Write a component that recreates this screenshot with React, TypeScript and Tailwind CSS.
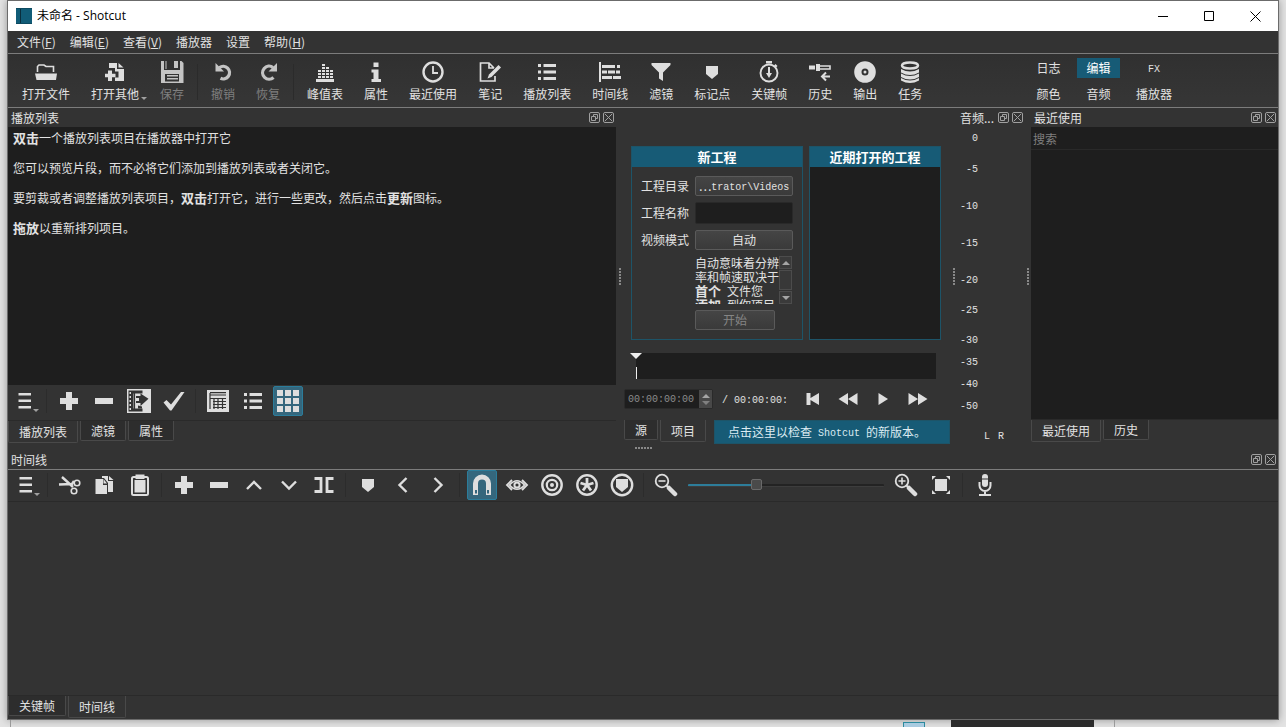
import React, { useState } from 'react';
import type { ReactNode } from 'react';

function Svg({ children, size = 24 }: { children: ReactNode; size?: number }) {
  return (
    <svg width={size} height={size} viewBox="0 0 24 24" fill="currentColor" aria-hidden="true" className="shrink-0">
      {children}
    </svg>
  );
}

const stroke = { fill: 'none', stroke: 'currentColor' } as const;
const SHIELD = 'M6 6h12v8l-6 5-6-5z';

const icons: Record<string, ReactNode> = {
  open: (
    <>
      <path d="M3.500 12V6.500l1.500-1.500h5l2 1.500h7.500V12" {...stroke} strokeWidth="1.600" />
      <path d="M1 13.500h22L22 20H2.500z" />
    </>
  ),
  other: (
    <>
      <path d="M6 3h8v6h7v12H12v-3.500h3.500v-6H12V8H6z" />
      <path d="M15.500 3l5 4.500h-5z" />
      <path d="M5 10.500h4v3.300h3.500v3.400H9V21H5v-3.800H2v-3.400h3z" />
    </>
  ),
  save: (
    <>
      <path fillRule="evenodd" d="M1 1h3v9h16V1h1.500L23.500 3v20H1zM5 14v7.500h14V14z" />
      <path d="M14 1h4v7h-4zM5.500 1h1v8h-1zM7 15h11v1.500H7zM7 18h11v1.500H7z" />
    </>
  ),
  undo: (
    <>
      <path d="M8.500 7.500A6.300 6.300 0 1 1 9.500 18.300" {...stroke} strokeWidth="3.300" />
      <path d="M4.500 3v8.500H13z" />
    </>
  ),
  redo: (
    <>
      <path d="M17 7.500a6.500 6.500 0 1 0 .5 10" {...stroke} strokeWidth="3.300" />
      <path d="M21 3v8.500h-8.500z" />
    </>
  ),
  peak: (
    <path d="M3 19h18v3H3zM5 16h3v2H5zM9 16h3v2H9zM13 16h3v2h-3zM17 16h3v2h-3zM5 13h3v2H5zM9 13h3v2H9zM13 13h3v2h-3zM17 13h3v2h-3zM5 10h3v2H5zM9 10h3v2H9zM13 10h3v2h-3zM17 10h3v2h-3zM9 7h3v2H9zM13 7h3v2h-3zM9 4h3v2H9z" />
  ),
  info: <path d="M9.500 2.500h5v4.500h-5zM7.500 9.500h7V19H17v3H7.500v-3h2v-6.500h-2z" />,
  clock: (
    <>
      <circle cx="12" cy="12" r="9.500" {...stroke} strokeWidth="2.400" />
      <path d="M12 6v7h5" {...stroke} strokeWidth="1.800" />
    </>
  ),
  notes: (
    <>
      <path d="M17 16v5H2.500V3H11l5 5M11 3v5h5" {...stroke} strokeWidth="1.700" />
      <path d="M20.500 5l2.500 2.500L13.500 17l-4 1.500L11 14.500z" />
    </>
  ),
  list: <path d="M3 4h3v3H3zM8.500 4H21v3H8.500zM3 10.500h3v3H3zM8.500 10.500H21v3H8.500zM3 17h3v3H3zM8.500 17H21v3H8.500z" />,
  timeline: <path d="M1 2h2v20H1zM4 5h13v3H4zM19 5h3v3h-3zM4 10.500h5v3H4zM10 10.500h7v3h-7zM18 10.500h4v3h-4zM4 16h10v3H4zM15 16h8v3h-8z" />,
  filter: <path d="M2.500 3h19v2l-7.500 7.500V21l-4-2.500v-6L2.500 5z" />,
  marker: <path d={SHIELD} />,
  stopwatch: (
    <>
      <circle cx="12" cy="13" r="8.500" {...stroke} strokeWidth="1.900" />
      <path d="M9 1h6v2.500H9zM18.500 4l2 2-1.500 1.500-2-2zM11 7h2v6h2l-3 5-3-5h2z" />
    </>
  ),
  history: (
    <>
      <path d="M1 5.500h6v4H1zM8 4h4v7H8z" />
      <path d="M12 6h10v3H12" {...stroke} strokeWidth="1.600" />
      <path d="M18 12.500l-4 4 4 4M14 16.500h8" {...stroke} strokeWidth="2" />
    </>
  ),
  disc: (
    <path fillRule="evenodd" d="M12 1.200a10.800 10.800 0 1 0 0 21.600 10.800 10.800 0 0 0 0-21.600zM12 8.500a3.500 3.500 0 1 1 0 7 3.500 3.500 0 0 1 0-7zM12 10.500a1.500 1.500 0 1 0 0 3 1.500 1.500 0 0 0 0-3z" />
  ),
  jobs: (
    <>
      <ellipse cx="12" cy="5.500" rx="8" ry="3" {...stroke} strokeWidth="2.500" />
      <path d="M3 9q9 5 18 0v3.500q-9 5-18 0zM3 13.500q9 5 18 0v3.500q-9 5-18 0zM3 18q9 5 18 0v2.500q-9 5-18 0z" />
    </>
  ),
  menu: <path d="M5.500 4H18v2.500H5.500zM5.500 10.500H18V13H5.500zM5.500 17H18v2.500H5.500z" />,
  plus: <path d="M9 3h6v6h6v6h-6v6H9v-6H3V9h6z" />,
  minus: <path d="M3 9h18v6H3z" />,
  film: (
    <>
      <path d="M0 0h24v24H0z" />
      <path d="M1.500 1.500h14v3h-14zM1.500 4h4v16h-4zM1.500 19.500h14v3h-14zM5 4h1.500v16H5z" fill="#333" />
      <path d="M7.500 4v16" stroke="#333" strokeWidth="1.200" />
      <path d="M2.500 3h1.500v2H2.500zM2.500 7h1.500v2H2.500zM2.500 11h1.500v2H2.500zM2.500 15h1.500v2H2.500zM2.500 19h1.500v2H2.500z" />
      <path d="M13.500 4.500V7H9v7h4.500v3l8-7.200zM11 16.500v3h4v-2" fill="#333" />
      <path d="M9 9h3v3H9z" />
    </>
  ),
  check: <path d="M1.500 13.500L4.500 11l4.500 4.500L19 3h3.500L9.500 21.500H8z" />,
  table: (
    <>
      <path d="M1 1h22v22H1z" />
      <path d="M4 3.700h16M4 6h16M4 4v16M4 9.500h16M7 12.500h13M7 15.500h13M7 18.500h13M8 9v11M12 9v11M16.500 9v11" fill="none" stroke="#333" strokeWidth="1.200" />
    </>
  ),
  grid: <path d="M1 1h6v6H1zM9 1h6v6H9zM17 1h6v6h-6zM1 9h6v6H1zM9 9h6v6H9zM17 9h6v6h-6zM1 17h6v6H1zM9 17h6v6H9zM17 17h6v6h-6z" />,
  cut: (
    <>
      <path d="M4 4l11 10M1 11.500l13-.5 2-3" {...stroke} strokeWidth="2.400" />
      <circle cx="19" cy="10" r="2.800" {...stroke} strokeWidth="1.600" />
      <circle cx="16" cy="18" r="2.800" {...stroke} strokeWidth="1.600" />
    </>
  ),
  copy: (
    <>
      <path d="M2.500 6H10v6h4v9H2.500zM10.500 6L14 10.500h-3.500z" />
      <path d="M9 3h6v5h5v11h-5V10L11 5H9zM16 3l4.500 4H16z" />
    </>
  ),
  paste: (
    <>
      <rect x="4" y="4" width="16" height="18" rx="1.500" {...stroke} strokeWidth="2" />
      <path d="M6.500 7h11v12.500h-11zM7.500 1.500h9V6h-9z" />
      <path d="M7.500 6.500h9" stroke="#333" />
    </>
  ),
  up: <path d="M5 16l7-7 7 7" {...stroke} strokeWidth="2.400" />,
  down: <path d="M5 8.500l7 7 7-7" {...stroke} strokeWidth="2.400" />,
  left: <path d="M15.500 5l-7 7 7 7" {...stroke} strokeWidth="2.400" />,
  right: <path d="M8.500 5l7 7-7 7" {...stroke} strokeWidth="2.400" />,
  split: <path d="M2.500 5.500h6.500v13H2.500M21.500 5.500H15v13h6.500" {...stroke} strokeWidth="2.800" />,
  magnet: (
    <>
      <path d="M5.500 22V10.500a6.500 6.500 0 0 1 13 0V22" {...stroke} strokeWidth="5" />
      <path d="M5 17h2v3.500H5zM17 17h2v3.500h-2z" fill="#35677d" />
    </>
  ),
  scrub: (
    <>
      <path d="M7 7l-5 5 5 5M17 7l5 5-5 5" {...stroke} strokeWidth="1.900" />
      <path d="M4.500 12q7.500-8.500 15 0-7.500 8.500-15 0z" {...stroke} strokeWidth="1.700" />
      <circle cx="12" cy="12" r="2.600" {...stroke} strokeWidth="2" />
    </>
  ),
  ripple: (
    <>
      <circle cx="12" cy="12" r="9.700" {...stroke} strokeWidth="2.400" />
      <circle cx="12" cy="12" r="5.200" {...stroke} strokeWidth="2.200" />
      <circle cx="12" cy="12" r="2" />
    </>
  ),
  rippleAll: (
    <>
      <circle cx="12" cy="12" r="9.700" {...stroke} strokeWidth="2.400" />
      <path d="M12 5v7M5.500 10l6.500 2M18.500 10L12 12M8 17.500l4-5.500 4 5.500" {...stroke} strokeWidth="2.800" />
    </>
  ),
  rippleMarker: (
    <>
      <circle cx="12" cy="12" r="10.200" {...stroke} strokeWidth="2.400" />
      <path d="M6 6h12v8l-6 5-6-5z" />
    </>
  ),
  zoomOut: (
    <>
      <circle cx="8" cy="8" r="6.300" {...stroke} strokeWidth="1.800" />
      <path d="M4.500 8h7" stroke="currentColor" strokeWidth="1.600" />
      <path d="M12.500 12.500l2 2" stroke="currentColor" strokeWidth="2" />
      <path d="M15 15l6 6" stroke="currentColor" strokeWidth="4.500" strokeLinecap="round" />
    </>
  ),
  zoomIn: (
    <>
      <circle cx="8" cy="8" r="6.300" {...stroke} strokeWidth="1.800" />
      <path d="M4.500 8h7M8 4.500v7" stroke="currentColor" strokeWidth="1.600" />
      <path d="M12.500 12.500l2 2" stroke="currentColor" strokeWidth="2" />
      <path d="M15 15l6 6" stroke="currentColor" strokeWidth="4.500" strokeLinecap="round" />
    </>
  ),
  fit: (
    <>
      <path d="M6 6h12v12H6z" />
      <path d="M3 3h4L3 7zM21 3v4l-4-4zM3 21v-4l4 4zM21 21h-4l4-4z" />
    </>
  ),
  mic: (
    <>
      <rect x="9" y="1" width="6" height="13" rx="3" />
      <path d="M9 6h6" stroke="#333" />
      <path d="M6.500 9v3.500a5.500 5.500 0 0 0 11 0V9M12 18v4M6 22h12" {...stroke} strokeWidth="2" />
    </>
  ),
  start: <path d="M5.500 6h4v5L18 6v12l-8.500-5v5h-4z" />,
  rewind: <path d="M12 6v12l-9.500-6zM21.500 6v12L12 12z" />,
  play: <path d="M7.500 6l9.500 6-9.500 6z" />,
  forward: <path d="M2.500 6l9.500 6-9.500 6zM12 6l9.500 6-9.500 6z" />,
};

function Caret({ className }: { className: string }) {
  return <span className={`absolute border-x-[3px] border-t-[3px] border-x-transparent border-t-[#a0a0a0] ${className}`} />;
}

type Tool = { icon: string; label: string; disabled?: boolean; menu?: boolean } | 'sep';

const mainTools: Tool[] = [
  { icon: 'open', label: '打开文件' },
  { icon: 'other', label: '打开其他', menu: true },
  { icon: 'save', label: '保存', disabled: true },
  'sep',
  { icon: 'undo', label: '撤销', disabled: true },
  { icon: 'redo', label: '恢复', disabled: true },
  'sep',
  { icon: 'peak', label: '峰值表' },
  { icon: 'info', label: '属性' },
  { icon: 'clock', label: '最近使用' },
  { icon: 'notes', label: '笔记' },
  { icon: 'list', label: '播放列表' },
  { icon: 'timeline', label: '时间线' },
  { icon: 'filter', label: '滤镜' },
  { icon: 'marker', label: '标记点' },
  { icon: 'stopwatch', label: '关键帧' },
  { icon: 'history', label: '历史' },
  { icon: 'disc', label: '输出' },
  { icon: 'jobs', label: '任务' },
];

function ToolButton({ icon, label, active, menu }: { icon: string; label: string; active?: boolean; menu?: boolean }) {
  return (
    <button
      type="button"
      aria-label={label}
      aria-pressed={active}
      className={`relative flex h-[30px] w-[30px] shrink-0 items-center justify-center rounded-[2px] border text-[#dedede] ${
        active ? 'border-[#2b7d9b] bg-[#35677d]' : 'border-transparent'
      }`}
    >
      <Svg>{icons[icon]}</Svg>
      {menu && <Caret className="right-0 bottom-[3px]" />}
    </button>
  );
}

function Sep() {
  return <span className="mx-[1px] mt-[3px] h-6 w-[2px] shrink-0 border-l border-[#2c2c2c]" />;
}

function DockTitle({ children }: { children: ReactNode }) {
  return (
    <header className="flex h-[19px] shrink-0 items-center gap-[3px] pr-[2px] pl-[3px]">
      <h2 className="min-w-0 flex-1 text-[12px] leading-4 whitespace-nowrap">{children}</h2>
      <button type="button" aria-label="浮动" className="text-[#a0a0a0]">
        <svg width="11" height="11" viewBox="0 0 11 11" fill="none" stroke="currentColor">
          <rect x=".5" y=".5" width="10" height="10" rx="1.500" />
          <path d="M4.500 4V2.500h4v4H7M2.500 4.500h4v4h-4z" />
        </svg>
      </button>
      <button type="button" aria-label="关闭" className="text-[#a0a0a0]">
        <svg width="11" height="11" viewBox="0 0 11 11" fill="none" stroke="currentColor">
          <rect x=".5" y=".5" width="10" height="10" rx="1.500" />
          <path d="M2 2l7 7M9 2l-7 7" />
        </svg>
      </button>
    </header>
  );
}

function Tabs({ items, initial = 0 }: { items: string[]; initial?: number }) {
  const [current, setCurrent] = useState(initial);
  return (
    <div role="tablist" className="flex items-start gap-[2px]">
      {items.map((item, i) => (
        <button
          key={item}
          type="button"
          role="tab"
          aria-selected={i === current}
          onClick={() => setCurrent(i)}
          className={`rounded-b-[2px] border border-t-0 border-[#494949] px-[10px] leading-4 ${
            i === current ? 'bg-[#333] pt-[3px] pb-[2px]' : 'bg-[#2d2d2d] pt-[2px] pb-px'
          }`}
        >
          {item}
        </button>
      ))}
    </div>
  );
}

function Grip({ horizontal }: { horizontal?: boolean }) {
  return (
    <span className={`flex gap-px ${horizontal ? '' : 'flex-col'}`}>
      {[0, 1, 2, 3, 4, 5].map((n) => (
        <i key={n} className="h-[2px] w-[2px] bg-[#888]" />
      ))}
    </span>
  );
}

const Mono = ({ children }: { children: ReactNode }) => (
  <span className="align-[1px] font-['Liberation_Mono',monospace] text-[10px] leading-none whitespace-pre">{children}</span>
);

const B = ({ children }: { children: ReactNode }) => <b className="text-[13px] leading-none font-bold">{children}</b>;

const menus: [string, string?][] = [['文件', 'F'], ['编辑', 'E'], ['查看', 'V'], ['播放器'], ['设置'], ['帮助', 'H']];

const layouts = ['日志', '编辑', 'FX', '颜色', '音频', '播放器'];

const levels = [
  { label: '0', gap: '' },
  { label: '-5', gap: 'mt-[15px]' },
  { label: '-10', gap: 'mt-[21px]' },
  { label: '-15', gap: 'mt-[21px]' },
  { label: '-20', gap: 'mt-[21px]' },
  { label: '-25', gap: 'mt-[14px]' },
  { label: '-30', gap: 'mt-[14px]' },
  { label: '-35', gap: 'mt-[6px]' },
  { label: '-40', gap: 'mt-[6px]' },
  { label: '-50', gap: 'mt-[6px]' },
];

const raised = 'rounded-[2px] border border-[#5a5a5a] bg-linear-to-b from-[#454545] to-[#3a3a3a]';

function TitleBar() {
  return (
    <div className="flex h-[30px] shrink-0 items-center bg-white pl-2 text-black">
      <svg width="16" height="16" viewBox="0 0 16 16" aria-hidden="true">
        <path d="M0 0h16v16H0z" fill="#115c77" />
        <path d="M4.500 0v16" stroke="#0a2e3d" />
        <path d="M0 .5h16M0 15.500h16" stroke="#0d4a60" />
      </svg>
      <h1 className="ml-[5px] flex-1 font-['Open_Sans','Noto_Sans_CJK_SC',sans-serif] text-[12px]">未命名 - Shotcut</h1>
      <button type="button" aria-label="最小化" className="flex h-full w-[46px] items-center justify-center">
        <svg width="11" height="11" viewBox="0 0 11 11" stroke="currentColor"><path d="M0 5.500h10" /></svg>
      </button>
      <button type="button" aria-label="最大化" className="flex h-full w-[46px] items-center justify-center">
        <svg width="11" height="11" viewBox="0 0 11 11" fill="none" stroke="currentColor"><path d="M.5.5h9v9h-9z" /></svg>
      </button>
      <button type="button" aria-label="关闭窗口" className="flex h-full w-[46px] items-center justify-center">
        <svg width="11" height="11" viewBox="0 0 11 11" stroke="currentColor"><path d="M.5.5l10 10M10.500.5l-10 10" /></svg>
      </button>
    </div>
  );
}

function MainToolbar() {
  return (
    <div className="flex h-[54px] shrink-0 items-start border-b border-[#7c7c7c] bg-linear-to-b from-[#303030] to-[#363636]">
      <div className="flex gap-px pt-[6px] pl-1">
        {mainTools.map((t, i) =>
          t === 'sep' ? (
            <span key={i} className="flex w-[5px] justify-center">
              <i className="mt-1 h-9 w-px bg-[#2b2b2b]" />
            </span>
          ) : (
            <button key={i} type="button" disabled={t.disabled} className="relative flex flex-col items-center px-[10px]">
              <span className={t.disabled ? 'text-[#c4c4c4]' : 'text-[#dedede]'}>
                <Svg>{icons[t.icon]}</Svg>
              </span>
              <span className={`mt-[2px] leading-4 ${t.disabled ? 'text-[#7f7f7f]' : ''}`}>{t.label}</span>
              {t.menu && <Caret className="right-[2px] bottom-[2px]" />}
            </button>
          ),
        )}
      </div>
      <div className="mt-1 mr-[97px] ml-auto grid grid-cols-[43px_43px_54px] gap-x-[7px] gap-y-[6px]">
        {layouts.map((l) => (
          <button key={l} type="button" className={`h-5 leading-5 ${l === '编辑' ? 'bg-[#175b76] text-white' : ''}`}>
            {l === 'FX' ? <Mono>FX</Mono> : l}
          </button>
        ))}
      </div>
    </div>
  );
}

function PlaylistDock() {
  return (
    <section className="flex min-w-0 flex-1 flex-col">
      <DockTitle>播放列表</DockTitle>
      <div className="flex-1 space-y-[15px] bg-[#1e1e1e] pt-[3px] pl-[5px] leading-[15px]">
        <p><B>双击</B>一个播放列表项目在播放器中打开它</p>
        <p>您可以预览片段，而不必将它们添加到播放列表或者关闭它。</p>
        <p>要剪裁或者调整播放列表项目，<B>双击</B>打开它，进行一些更改，然后点击<B>更新</B>图标。</p>
        <p><B>拖放</B>以重新排列项目。</p>
      </div>
      <div className="flex h-9 shrink-0 items-start gap-[5px] border-b border-[#2a2a2a] pt-px pl-[2px]">
        <ToolButton icon="menu" label="菜单" menu />
        <Sep />
        <ToolButton icon="plus" label="添加" />
        <ToolButton icon="minus" label="移除" />
        <ToolButton icon="film" label="添加文件到播放列表" />
        <ToolButton icon="check" label="更新" />
        <Sep />
        <ToolButton icon="table" label="详细视图" />
        <ToolButton icon="list" label="列表视图" />
        <ToolButton icon="grid" label="图标视图" active />
      </div>
      <div className="h-6 shrink-0">
        <Tabs items={['播放列表', '滤镜', '属性']} />
      </div>
    </section>
  );
}

function ProjectPanels() {
  return (
    <div className="mt-[38px] ml-[7px] flex h-[194px] shrink-0 gap-[6px]">
      <section className="flex w-[172px] flex-col border border-[#1d5468]">
        <h3 className="h-5 bg-[#175b76] text-center text-[13px] leading-5 font-bold text-white">新工程</h3>
        <form className="grid grid-cols-[48px_98px] gap-x-[6px] pt-[9px] pl-[9px]" onSubmit={(e) => e.preventDefault()}>
          <label htmlFor="folder" className="leading-5">工程目录</label>
          <button id="folder" type="button" className={`h-5 leading-[18px] whitespace-nowrap ${raised}`}>⋯<Mono>trator\Videos</Mono></button>
          <label htmlFor="name" className="mt-[6px] leading-[22px]">工程名称</label>
          <input id="name" className="mt-[6px] h-[22px] w-full rounded-[2px] border border-[#292929] bg-[#1e1e1e] px-1 outline-none" />
          <label htmlFor="mode" className="mt-[6px] leading-5">视频模式</label>
          <button id="mode" type="button" className={`mt-[6px] h-5 leading-[18px] ${raised}`}>自动</button>
          <div className="col-start-2 mt-[6px] flex h-[48px] overflow-hidden">
            <p className="w-[84px] shrink-0 leading-[14px] whitespace-nowrap">
              自动意味着分辨<br />率和帧速取决于<br /><B>首个</B><Mono> </Mono>文件您<br /><B>添加</B><Mono> </Mono>到你项目
            </p>
            <div className="flex w-[13px] flex-col">
              <span className="flex h-[13px] items-center justify-center border border-[#4c4c4c] bg-[#3a3a3a]">
                <i className="border-x-4 border-b-4 border-x-transparent border-b-[#a5a5a5]" />
              </span>
              <span className="my-px flex-1 border border-[#4c4c4c] bg-[#383838]" />
              <span className="flex h-[13px] items-center justify-center border border-[#4c4c4c] bg-[#3a3a3a]">
                <i className="border-x-4 border-t-4 border-x-transparent border-t-[#a5a5a5]" />
              </span>
            </div>
          </div>
          <button type="submit" disabled className={`col-start-2 mt-[6px] h-5 w-[80px] leading-[18px] text-[#858585] ${raised}`}>开始</button>
        </form>
      </section>
      <section className="flex w-[132px] flex-col border border-[#1d5468] bg-[#1e1e1e]">
        <h3 className="h-5 bg-[#175b76] text-center text-[13px] leading-5 font-bold text-white">近期打开的工程</h3>
      </section>
    </div>
  );
}

function Player() {
  return (
    <section className="flex w-[327px] shrink-0 flex-col">
      <ProjectPanels />
      <div className="relative mt-[13px] mr-[15px] ml-3 h-[26px] shrink-0 bg-[#1e1e1e]">
        <span className="absolute top-0 -left-[6px] border-x-[6px] border-t-[6px] border-x-transparent border-t-[#efefef]" />
        <span className="absolute bottom-0 left-0 h-3 w-px bg-[#efefef]" />
      </div>
      <div className="mt-[9px] flex h-[22px] shrink-0 items-center">
        <div className="flex h-[20px] w-[89px] rounded-[2px] border border-[#2a2a2a] bg-[#1e1e1e]">
          <input
            aria-label="当前位置"
            defaultValue="00:00:00:00"
            className="w-[74px] bg-transparent pl-[3px] font-['Liberation_Mono',monospace] text-[10px] text-[#8c8c8c] outline-none"
          />
          <span className="flex flex-1 flex-col items-center justify-center gap-[3px] bg-[#484848]">
            <i className="border-x-4 border-b-4 border-x-transparent border-b-[#a5a5a5]" />
            <i className="border-x-4 border-t-4 border-x-transparent border-t-[#808080]" />
          </span>
        </div>
        <span className="ml-[9px]"><Mono>/ 00:00:00:</Mono></span>
        <div className="ml-[13px] flex gap-[11px] text-[#dedede]">
          {[['start', '跳到开头'], ['rewind', '快退'], ['play', '播放'], ['forward', '快进']].map(([icon, label]) => (
            <button key={icon} type="button" aria-label={label}><Svg>{icons[icon]}</Svg></button>
          ))}
        </div>
      </div>
      <div className="mt-[10px] flex shrink-0 items-start gap-2">
        <Tabs items={['源', '项目']} initial={1} />
        <button type="button" className="mr-px h-6 flex-1 border border-[#1d5468] bg-[#175b76] pr-[10px] leading-[22px] whitespace-nowrap text-[#dcebf2]">
          点击这里以检查<Mono> Shotcut </Mono>的新版本。
        </button>
      </div>
    </section>
  );
}

function AudioDock() {
  return (
    <section className="w-[68px] shrink-0">
      <DockTitle>音频...</DockTitle>
      <ul className="w-[21px] pt-1 text-right font-['Liberation_Mono',monospace] text-[10px] leading-4">
        {levels.map((l) => (
          <li key={l.label} className={l.gap}>{l.label}</li>
        ))}
      </ul>
      <p className="mt-[14px] flex gap-2 pl-[27px] font-['Liberation_Mono',monospace] text-[10px] leading-4">
        <span>L</span>
        <span>R</span>
      </p>
    </section>
  );
}

function RecentDock() {
  return (
    <section className="flex w-[247px] shrink-0 flex-col">
      <DockTitle>最近使用</DockTitle>
      <input
        aria-label="搜索"
        placeholder="搜索"
        className="h-[23px] w-full shrink-0 border-b border-[#292929] bg-[#1e1e1e] px-[2px] outline-none placeholder:text-[#7f7f7f]"
      />
      <div className="flex-1 border-b border-[#2a2a2a] bg-[#1e1e1e]" />
      <div className="h-[25px] shrink-0">
        <Tabs items={['最近使用', '历史']} />
      </div>
    </section>
  );
}

function TimelineDock() {
  const [zoom, setZoom] = useState(34);
  return (
    <section className="flex min-h-0 flex-1 flex-col">
      <DockTitle>时间线</DockTitle>
      <div className="flex h-[33px] shrink-0 items-start gap-[5px] border-t border-b border-t-[#7c7c7c] border-b-[#2a2a2a] pl-[3px]">
        <ToolButton icon="menu" label="时间线菜单" menu />
        <Sep />
        <ToolButton icon="cut" label="剪切" />
        <ToolButton icon="copy" label="复制" />
        <ToolButton icon="paste" label="粘贴" />
        <Sep />
        <ToolButton icon="plus" label="追加" />
        <ToolButton icon="minus" label="波纹删除" />
        <ToolButton icon="up" label="提升" />
        <ToolButton icon="down" label="覆盖" />
        <ToolButton icon="split" label="分割" />
        <Sep />
        <ToolButton icon="marker" label="标记" />
        <ToolButton icon="left" label="上一个标记" />
        <ToolButton icon="right" label="下一个标记" />
        <Sep />
        <ToolButton icon="magnet" label="吸附" active />
        <ToolButton icon="scrub" label="拖动时播放" />
        <ToolButton icon="ripple" label="波纹" />
        <ToolButton icon="rippleAll" label="波纹所有轨道" />
        <ToolButton icon="rippleMarker" label="波纹标记" />
        <Sep />
        <ToolButton icon="zoomOut" label="缩小" />
        <div className="flex h-[30px] items-center px-[2px]">
          <input
            type="range"
            aria-label="缩放"
            value={zoom}
            onChange={(e) => setZoom(Number(e.target.value))}
            style={{ backgroundImage: `linear-gradient(to right, #2d7d9a ${zoom}%, #232323 ${zoom}%)` }}
            className="h-[3px] w-[196px] appearance-none rounded-[1px] border-b border-[#3d3d3d] [&::-webkit-slider-thumb]:h-[11px] [&::-webkit-slider-thumb]:w-[11px] [&::-webkit-slider-thumb]:appearance-none [&::-webkit-slider-thumb]:rounded-[2px] [&::-webkit-slider-thumb]:border [&::-webkit-slider-thumb]:border-[#6a6a6a] [&::-webkit-slider-thumb]:bg-[#4a4a4a]"
          />
        </div>
        <ToolButton icon="zoomIn" label="放大" />
        <ToolButton icon="fit" label="适合窗口" />
        <Sep />
        <ToolButton icon="mic" label="录音" />
      </div>
      <div className="flex-1 border-b border-[#2a2a2a]" />
      <div className="h-[23px] shrink-0">
        <Tabs items={['关键帧', '时间线']} initial={1} />
      </div>
    </section>
  );
}

export default function App() {
  return (
    <div className="flex h-screen flex-col overflow-hidden bg-[#e3e3e3] font-['Noto_Sans_CJK_SC',sans-serif] text-[12px] text-[#e2e2e2]">
      <main className="mr-[7px] ml-[7px] flex min-h-0 flex-1 flex-col border border-[#6b6b6b] bg-[#333] shadow-[0_0_8px_rgba(0,0,0,0.35)]">
        <TitleBar />
        <nav className="flex h-[23px] shrink-0 items-center border-b border-[#7c7c7c] pl-[2px]">
          {menus.map(([name, key]) => (
            <button key={name} type="button" className="px-[7px] leading-4">
              {name}
              {key && <>(<u>{key}</u>)</>}
            </button>
          ))}
        </nav>
        <MainToolbar />
        <div className="flex h-[337px] shrink-0">
          <PlaylistDock />
          <div className="flex w-2 shrink-0 items-center justify-center"><Grip /></div>
          <Player />
          <div className="flex w-[6px] shrink-0 items-center justify-center"><Grip /></div>
          <AudioDock />
          <div className="flex w-[6px] shrink-0 items-center justify-center"><Grip /></div>
          <RecentDock />
        </div>
        <div className="flex h-[5px] shrink-0 items-center justify-center"><Grip horizontal /></div>
        <TimelineDock />
      </main>
      <footer className="flex h-[7px] shrink-0 items-end justify-end pr-[191px]">
        <span className="mr-auto ml-[10px] h-full w-px bg-[#9a9a9a]" />
        <span className="mr-[26px] h-[5px] w-[22px] border border-b-0 border-[#2b8a9e] bg-[#a9cbe0]" />
        <span className="h-full w-[143px] bg-[#2b2b2b]" />
        <span className="-mr-5 ml-5 h-full w-px bg-[#9a9a9a]" />
      </footer>
    </div>
  );
}
